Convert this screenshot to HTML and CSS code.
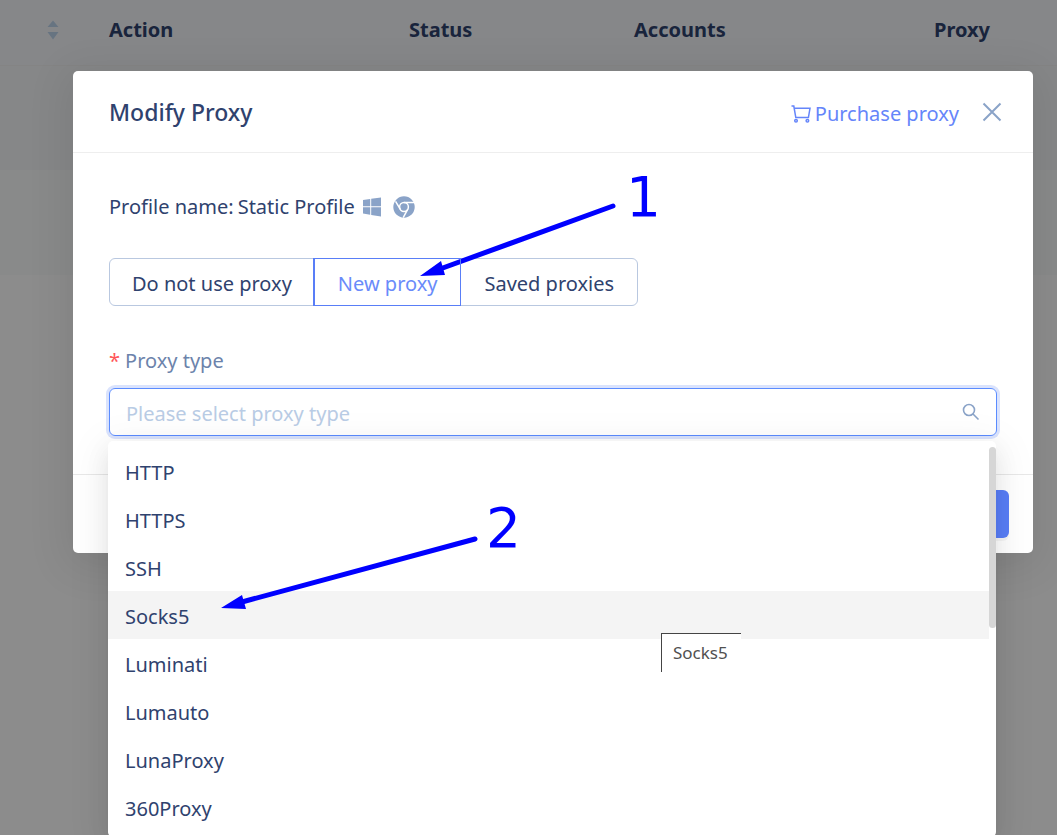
FILE: index.html
```
<!DOCTYPE html>
<html lang="en">
<head>
    <meta charset="UTF-8">
    <meta name="viewport" content="width=device-width, initial-scale=1.0">
    <title>Modify Proxy</title>
    <link rel="stylesheet" href="styles.css">
</head>
<body>

    <!-- Profiles table -->
    <table class="profiles">
        <thead>
            <tr>
                <th class="col-sort">
                    <svg class="sorter" viewBox="0 0 12 20" aria-hidden="true">
                        <path d="M0.5 7 6 0.5 11.5 7zM0.5 12h11L6 19.5z"/>
                    </svg>
                </th>
                <th class="col-action">Action</th>
                <th class="col-status">Status</th>
                <th class="col-accounts">Accounts</th>
                <th>Proxy</th>
            </tr>
        </thead>
        <tbody>
            <tr class="row-selected"><td colspan="5"></td></tr>
            <tr class="row-hover"><td colspan="5"></td></tr>
        </tbody>
    </table>

    <div class="mask">
        <div class="modal" role="dialog" aria-labelledby="modalTitle">
            <div class="modal-header">
                <h1 class="modal-title" id="modalTitle">Modify Proxy</h1>
                <a class="purchase" href="#">
                    <svg class="icon-cart" viewBox="0 0 20 18" aria-hidden="true">
                        <path d="M0.5 1h2.3l2 11.6h12.6L19 3.3H3.4"/>
                        <circle cx="5" cy="15.8" r="1.3"/>
                        <circle cx="16.4" cy="15.8" r="1.3"/>
                    </svg>
                    Purchase proxy
                </a>
                <button class="close" type="button" aria-label="Close">
                    <svg viewBox="0 0 20 20" aria-hidden="true"><path d="M1.5 1.5l17 17M18.5 1.5l-17 17"/></svg>
                </button>
            </div>

            <div class="modal-body">
                <div class="profile">
                    <span>Profile name:</span>
                    <span>Static Profile</span>
                    <svg class="icon-windows" viewBox="0 0 18 20" aria-hidden="true">
                        <path d="M0 3.1 7.2 2v7.3H0zM8.2 1.8 18 0.4v8.9H8.2zM0 10.3h7.2v7.4L0 16.6zM8.2 10.3H18v9.1l-9.8-1.5z"/>
                    </svg>
                    <svg class="icon-chrome" viewBox="0 0 22 22" aria-hidden="true">
                        <circle class="disc" cx="11" cy="11" r="10.7"/>
                        <circle class="ring" cx="11" cy="11" r="4.4"/>
                        <path class="ring" d="M11 6.6h10M7.2 13.2 2.6 5.4M14.8 13.2 10.2 21.6"/>
                    </svg>
                </div>

                <div class="tabs" role="radiogroup" aria-label="Proxy">
                    <label class="tab"><input type="radio" name="mode">Do not use proxy</label>
                    <label class="tab"><input type="radio" name="mode" checked>New proxy</label>
                    <label class="tab"><input type="radio" name="mode">Saved proxies</label>
                </div>

                <label class="field-label" for="proxyType"><span class="required">*</span>Proxy type</label>
                <div class="select">
                    <input class="select-input" id="proxyType" type="text" placeholder="Please select proxy type" role="combobox" aria-expanded="true" aria-controls="proxyList">
                    <svg class="icon-search" viewBox="0 0 18 18" aria-hidden="true">
                        <circle cx="7" cy="7" r="5.5"/>
                        <path d="M11 11l5.5 5.5"/>
                    </svg>
                    <div class="dropdown">
                        <ul class="options" id="proxyList" role="listbox">
                            <li class="option" role="option">HTTP</li>
                            <li class="option" role="option">HTTPS</li>
                            <li class="option" role="option">SSH</li>
                            <li class="option active" role="option">Socks5</li>
                            <li class="option" role="option">Luminati</li>
                            <li class="option" role="option">Lumauto</li>
                            <li class="option" role="option">LunaProxy</li>
                            <li class="option" role="option">360Proxy</li>
                        </ul>
                        <div class="scroll-thumb"></div>
                    </div>
                </div>
            </div>

            <div class="modal-footer">
                <button class="confirm" type="button" aria-label="OK"></button>
            </div>
        </div>
    </div>

    <div class="tooltip" role="tooltip">Socks5</div>

    <!-- Step arrows -->
    <svg class="steps" width="1057" height="835" viewBox="0 0 1057 835">
        <path class="line" d="M613 206 440 269M475 539 242 602"/>
        <path class="head" d="M420 276 441 261 445 275zM221 608 242 595 246 609z"/>
        <text x="626" y="216">1</text>
        <text x="486" y="547">2</text>
    </svg>

</body>
</html>
```
FILE: styles.css
```
* {
    box-sizing: border-box;
}
body {
    margin: 0;
    height: 100vh;
    overflow: hidden;
    position: relative;
    background-color: #fff;
    color: #2f426e;
    font-family: "Noto Sans", "Open Sans", sans-serif;
    font-size: 20px;
    line-height: 28px;
}
button,
input {
    font: inherit;
    color: inherit;
}

/* Table behind the dialog */
.profiles {
    width: 100%;
    border-collapse: collapse;
    table-layout: fixed;
}
.profiles th {
    height: 65px;
    padding: 0 0 4px;
    background-color: #f4f6fa;
    border-bottom: 1px solid #f0f0f0;
    text-align: left;
    font-weight: 700;
}
.profiles td {
    height: 105px;
    padding: 0;
}
.col-sort {
    width: 109px;
}
.profiles .col-sort {
    padding-left: 47px;
}
.col-action {
    width: 300px;
}
.col-status {
    width: 225px;
}
.col-accounts {
    width: 300px;
}
.sorter {
    display: block;
    width: 12px;
    height: 20px;
    fill: #bcd3ec;
}
.row-selected {
    background-color: #f5f6f8;
}
.row-hover {
    background-color: #fafbfc;
}

/* Dialog */
.mask {
    position: absolute;
    inset: 0;
    padding: 71px 24px 0 73px;
    background-color: rgba(0, 0, 0, 0.45);
}
.modal {
    background-color: #fff;
    border-radius: 5px;
    box-shadow: 0 8px 40px 8px rgba(0, 0, 0, 0.08);
}
.modal-header {
    display: flex;
    align-items: center;
    height: 82px;
    padding: 0 30px 0 36px;
    border-bottom: 1px solid #eee;
}
.modal-title {
    flex: 1;
    margin: 0;
    font-size: 23px;
    font-weight: 500;
}
.purchase {
    display: flex;
    align-items: center;
    gap: 4px;
    padding-top: 4px;
    color: #6585fa;
    text-decoration: none;
}
.icon-cart {
    width: 20px;
    height: 18px;
    fill: none;
    stroke: #6585fa;
    stroke-width: 1.5;
}
.close {
    display: flex;
    margin-left: 22px;
    padding: 0;
    border: 0;
    background: none;
}
.close svg {
    width: 22px;
    height: 20px;
    stroke: #8aa3c8;
    stroke-width: 2;
}
.modal-body {
    padding: 40px 36px 38px;
}
.profile {
    display: flex;
    align-items: center;
    gap: 4px;
}
.icon-windows {
    width: 18px;
    height: 20px;
    margin: 0 8px 0 4px;
    fill: #8aa3c8;
}
.icon-chrome {
    width: 22px;
    height: 22px;
}
.disc {
    fill: #8aa3c8;
}
.ring {
    fill: none;
    stroke: #fff;
    stroke-width: 1.5;
}
.tabs {
    display: flex;
    margin-top: 37px;
}
.tab {
    position: relative;
    height: 48px;
    padding: 0 22px;
    border: 1px solid #b9c8e0;
    line-height: 50px;
}
.tab + .tab {
    margin-left: -1px;
    padding: 0 23px;
}
.tab:first-child {
    border-radius: 6px 0 0 6px;
}
.tab:last-child {
    border-radius: 0 6px 6px 0;
}
.tab input {
    position: absolute;
    opacity: 0;
}
.tab:has(input:checked) {
    z-index: 1;
    border-color: #597ef7;
    box-shadow: -1px 0 0 #597ef7;
    color: #6a8bfa;
}
.field-label {
    display: block;
    margin-top: 41px;
    color: #6c83ab;
}
.required {
    margin-right: 5px;
    color: #ff5558;
}
.select {
    position: relative;
    margin-top: 13px;
}
.select-input {
    display: block;
    width: 100%;
    height: 48px;
    padding: 2px 48px 0 16px;
    border: 1px solid #5b8cff;
    border-radius: 6px;
    outline: none;
    box-shadow: 0 0 0 3px #dae3fd;
    background: none;
}
.select-input::placeholder {
    color: #b9cce5;
    opacity: 1;
}
.icon-search {
    position: absolute;
    top: 15px;
    right: 17px;
    width: 18px;
    height: 18px;
    fill: none;
    stroke: #8aa3c8;
    stroke-width: 1.6;
}
.dropdown {
    position: absolute;
    top: 53px;
    left: -1px;
    right: 1px;
    padding: 6px 0;
    border-radius: 5px;
    background-color: #fff;
    box-shadow: 0 8px 40px 8px rgba(0, 0, 0, 0.05), 0 8px 24px rgba(0, 0, 0, 0.08), 0 4px 8px -6px rgba(0, 0, 0, 0.12);
}
.options {
    margin: 0;
    padding: 0 7px 0 0;
    list-style: none;
}
.option {
    height: 48px;
    padding: 0 17px;
    line-height: 52px;
}
.option.active {
    background-color: #f4f4f4;
}
.scroll-thumb {
    position: absolute;
    top: 6px;
    right: 0;
    width: 7px;
    height: 181px;
    border-radius: 4px;
    background-color: #d6d6d6;
}
.modal-footer {
    display: flex;
    justify-content: flex-end;
    padding: 15px 24px;
    border-top: 1px solid #e8e8e8;
}
.confirm {
    width: 84px;
    height: 48px;
    border: 0;
    border-radius: 6px;
    background-color: #597ef7;
    box-shadow: 0 3px 0 rgba(0, 0, 0, 0.04);
}

/* Native-looking title hint under the pointer */
.tooltip {
    position: absolute;
    top: 633px;
    left: 661px;
    padding: 5px 13px 5px 11px;
    border-top: 1px solid #444;
    border-left: 1px solid #444;
    background-color: #fff;
    color: #505050;
    font-size: 17px;
}

/* Step arrows */
.steps {
    position: absolute;
    top: 0;
    left: 0;
    pointer-events: none;
}
.steps .line {
    stroke: #00f;
    stroke-width: 5;
    stroke-linecap: round;
}
.steps .head,
.steps text {
    fill: #00f;
}
.steps text {
    font-family: "DejaVu Sans", sans-serif;
    font-size: 55px;
}
```
